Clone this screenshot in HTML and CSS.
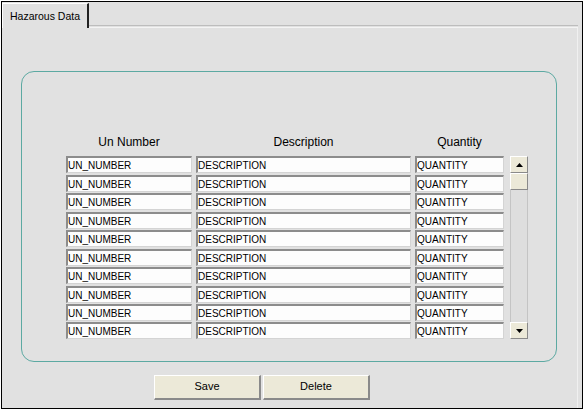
FILE: index.html
```html
<!DOCTYPE html>
<html>
<head>
<meta charset="utf-8">
<link rel="stylesheet" href="styles.css">
</head>
<body>
<div class="window">
  <div class="tabstrip">
    <div class="tab">Hazarous Data</div>
    <div class="tabline"></div>
  </div>
  <div class="body">
    <div class="panel">
      <div class="grid">
        <div class="head">Un Number</div>
        <div class="head">Description</div>
        <div class="head">Quantity</div>
        <div class="head"></div>

        <div class="cell un">UN_NUMBER</div><div class="cell">DESCRIPTION</div><div class="cell">QUANTITY</div>
        <div class="scroll">
          <div class="sbtn"><svg width="7" height="4" viewBox="0 0 7 4"><path d="M3.5 0 L7 4 L0 4 Z" fill="#000"/></svg></div>
          <div class="thumb"></div>
          <div class="track"></div>
          <div class="sbtn"><svg width="7" height="4" viewBox="0 0 7 4"><path d="M0 0 L7 0 L3.5 4 Z" fill="#000"/></svg></div>
        </div>
        <div class="cell un">UN_NUMBER</div><div class="cell">DESCRIPTION</div><div class="cell">QUANTITY</div>
        <div class="cell un">UN_NUMBER</div><div class="cell">DESCRIPTION</div><div class="cell">QUANTITY</div>
        <div class="cell un">UN_NUMBER</div><div class="cell">DESCRIPTION</div><div class="cell">QUANTITY</div>
        <div class="cell un">UN_NUMBER</div><div class="cell">DESCRIPTION</div><div class="cell">QUANTITY</div>
        <div class="cell un">UN_NUMBER</div><div class="cell">DESCRIPTION</div><div class="cell">QUANTITY</div>
        <div class="cell un">UN_NUMBER</div><div class="cell">DESCRIPTION</div><div class="cell">QUANTITY</div>
        <div class="cell un">UN_NUMBER</div><div class="cell">DESCRIPTION</div><div class="cell">QUANTITY</div>
        <div class="cell un">UN_NUMBER</div><div class="cell">DESCRIPTION</div><div class="cell">QUANTITY</div>
        <div class="cell un">UN_NUMBER</div><div class="cell">DESCRIPTION</div><div class="cell">QUANTITY</div>
      </div>
    </div>
    <div class="buttons">
      <div class="btn">Save</div>
      <div class="btn">Delete</div>
    </div>
  </div>
</div>
</body>
</html>
```

FILE: styles.css
```css
html, body {
  margin: 0;
  padding: 0;
  background: #ffffff;
}
body {
  font-family: "Liberation Sans", Arial, sans-serif;
  color: #000;
}
.window {
  margin: 1px 0 0 1px;
  width: 580px;
  height: 406px;
  border: 1px solid #000;
  background: #e1e1e1;
  display: flex;
  flex-direction: column;
}
.tabstrip {
  display: flex;
  align-items: flex-end;
  height: 26px;
  padding-right: 4px;
}
.tab {
  height: 25px;
  width: 87px;
  box-sizing: border-box;
  border-top: 1px solid #ffffff;
  border-left: 1px solid #ffffff;
  border-right: 2px solid #222;
  padding: 5px 0 0 7px;
  font-size: 10.5px;
  line-height: 14px;
  background: #e1e1e1;
}
.tabline {
  flex: 1;
  height: 1px;
  border-top: 1px solid #bdbdbd;
  border-bottom: 1px solid #f4f4f4;
}
.body {
  flex: 1;
  border-right: 1px solid #f0f0f0;
  margin-right: 4px;
  display: flex;
  flex-direction: column;
}
.panel {
  margin: 43px 0 0 19px;
  width: 536px;
  height: 291px;
  border: 1px solid #5ca9a2;
  border-radius: 13px;
  box-sizing: border-box;
  padding: 63px 0 0 44px;
}
.grid {
  display: grid;
  grid-template-columns: 126px 215px 89px 18px;
  column-gap: 4px;
  grid-template-rows: 20px repeat(10, 17px);
  row-gap: 1.45px;
}
.grid .head:nth-child(4) { margin-left: 2px; }
.head {
  font-size: 12px;
  line-height: 14px;
  text-align: center;
  align-self: start;
}
.cell {
  box-sizing: border-box;
  height: 17px;
  background: #fdfdfd;
  border-top: 2px solid #8c8c8c;
  border-left: 2px solid #8c8c8c;
  border-bottom: 1px solid #d4d4d4;
  border-right: 1px solid #d4d4d4;
  font-size: 10px;
  line-height: 15px;
  padding-left: 0;
  white-space: nowrap;
  overflow: hidden;
}
.scroll {
  grid-column: 4;
  grid-row: 2 / span 10;
  margin-left: 2px;
  width: 18px;
  display: flex;
  flex-direction: column;
  background: #dedede;
  border-left: 1px solid #c4c4c4;
  border-right: 1px solid #c4c4c4;
  box-sizing: border-box;
}
.sbtn, .thumb {
  height: 17px;
  box-sizing: border-box;
  background: #ece9d8;
  border-top: 1px solid #ffffff;
  border-left: 1px solid #ffffff;
  border-right: 1px solid #8a8a8a;
  border-bottom: 1px solid #8a8a8a;
  display: flex;
  align-items: center;
  justify-content: center;
  margin-left: -1px;
  margin-right: -1px;
}
.track {
  flex: 1;
}
.buttons {
  display: flex;
  gap: 2px;
  margin: 13px 0 0 152px;
}
.btn {
  width: 107px;
  height: 25px;
  box-sizing: border-box;
  background: #ece9d8;
  border-top: 1px solid #ffffff;
  border-left: 1px solid #ffffff;
  border-right: 2px solid #8a8a8a;
  border-bottom: 2px solid #8a8a8a;
  font-size: 11px;
  line-height: 21px;
  text-align: center;
}
```
